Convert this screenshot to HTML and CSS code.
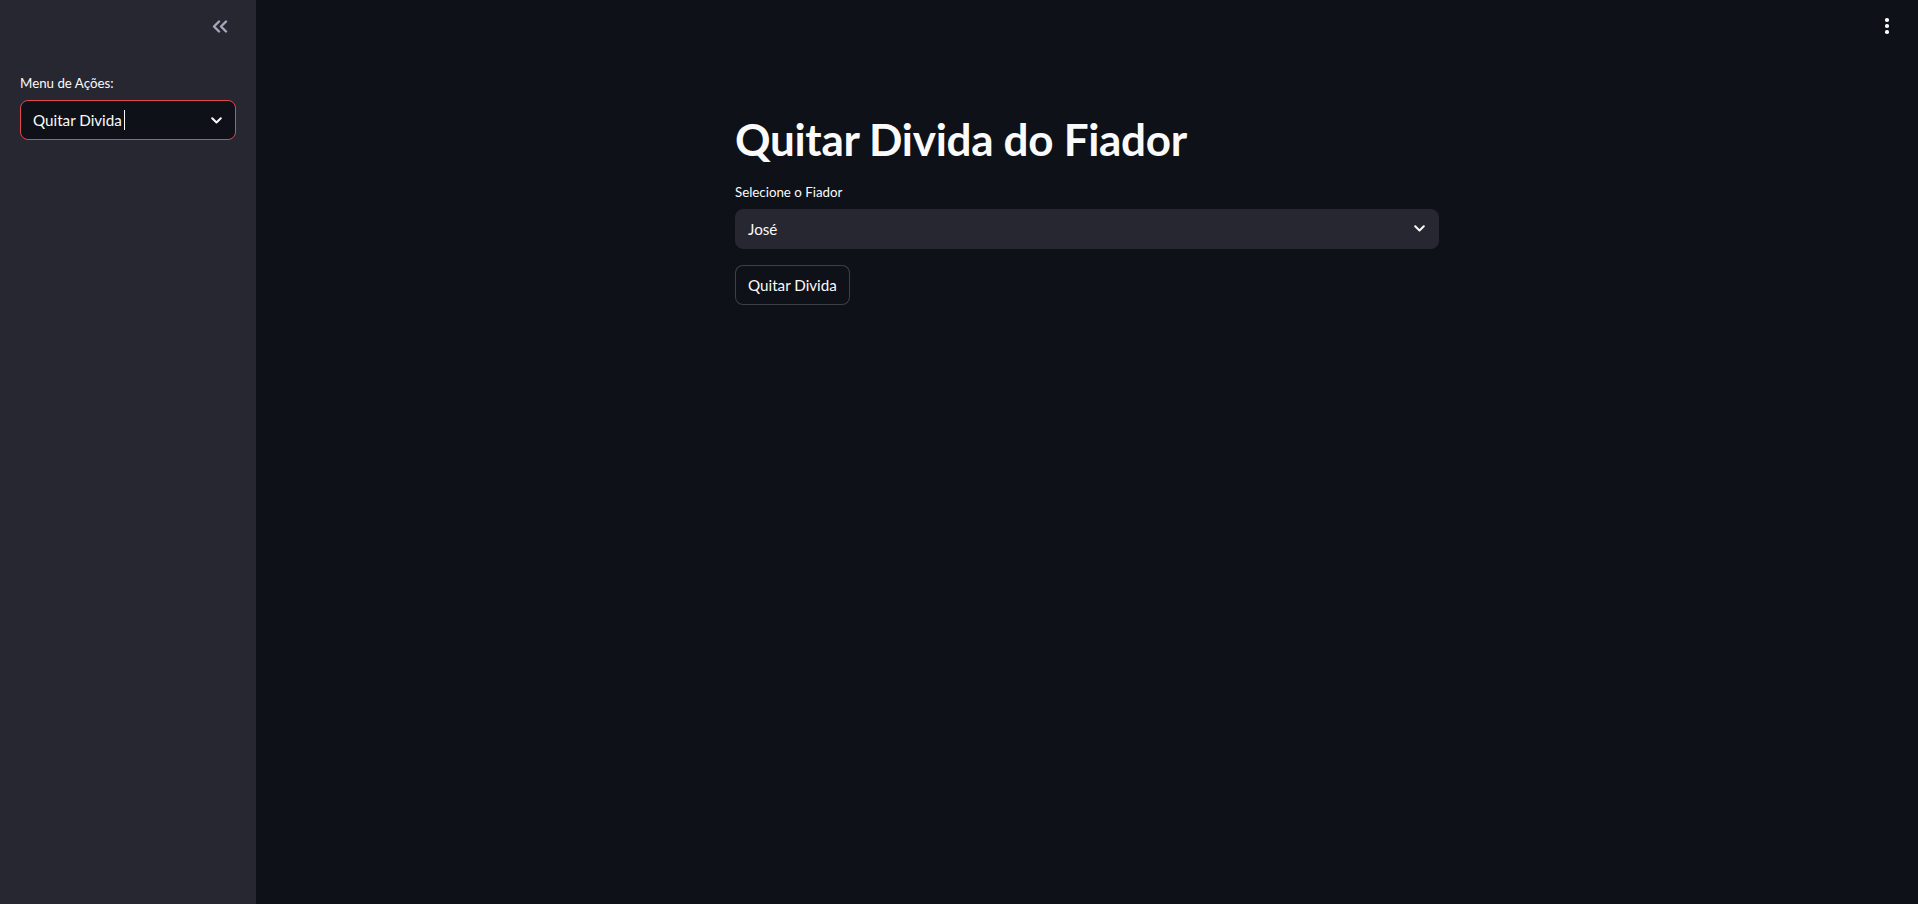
FILE: index.html
```html
<!DOCTYPE html>
<html lang="pt">
<head>
<meta charset="utf-8">
<title>Quitar Divida do Fiador</title>
<link rel="stylesheet" href="styles.css">
</head>
<body>
<aside class="sidebar">
  <div class="sidebar-header">
    <button class="collapse-btn" aria-label="Fechar barra lateral">
      <svg width="16" height="13" viewBox="0 0 16 13" fill="none" stroke="#a3a8b8" stroke-width="2.4" stroke-linecap="round" stroke-linejoin="round">
        <polyline points="7,1.5 2,6.5 7,11.5"/>
        <polyline points="14,1.5 9,6.5 14,11.5"/>
      </svg>
    </button>
  </div>
  <div class="sidebar-content">
    <label class="field-label">Menu de Ações:</label>
    <div class="select select-focused">
      <span class="select-value">Quitar Divida<span class="caret"></span></span>
      <svg class="chevron" width="11" height="7" viewBox="0 0 11 7" fill="none" stroke="#fafafa" stroke-width="2" stroke-linecap="round" stroke-linejoin="round">
        <polyline points="1.2,1.2 5.5,5.5 9.8,1.2"/>
      </svg>
    </div>
  </div>
</aside>
<main class="main">
  <header class="toolbar">
    <button class="menu-btn" aria-label="Menu">
      <span class="dot"></span><span class="dot"></span><span class="dot"></span>
    </button>
  </header>
  <section class="block">
    <h1 class="title">Quitar Divida do Fiador</h1>
    <label class="field-label">Selecione o Fiador</label>
    <div class="select select-filled">
      <span class="select-value">José</span>
      <svg class="chevron" width="11" height="7" viewBox="0 0 11 7" fill="none" stroke="#fafafa" stroke-width="2" stroke-linecap="round" stroke-linejoin="round">
        <polyline points="1.2,1.2 5.5,5.5 9.8,1.2"/>
      </svg>
    </div>
    <div class="actions">
      <button class="btn">Quitar Divida</button>
    </div>
  </section>
</main>
</body>
</html>
```
FILE: styles.css
```css
* { box-sizing: border-box; }

html, body {
  margin: 0;
  height: 100%;
}

body {
  display: flex;
  background: #0e1117;
  color: #fafafa;
  font-family: "Lato", "Liberation Sans", sans-serif;
  overflow: hidden;
}

.sidebar {
  width: 256px;
  flex: 0 0 256px;
  height: 100vh;
  background: #262730;
  display: flex;
  flex-direction: column;
}

.sidebar-header {
  display: flex;
  justify-content: flex-end;
  padding: 14px 24px 0 0;
  height: 40px;
}

.collapse-btn {
  background: none;
  border: none;
  padding: 0;
  width: 24px;
  height: 24px;
  display: flex;
  align-items: center;
  justify-content: center;
  cursor: pointer;
}

.sidebar-content {
  padding: 33px 20px 0 20px;
}

.field-label {
  display: block;
  font-size: 13.3px;
  line-height: 20px;
  color: #fafafa;
  margin-bottom: 7px;
}

.select {
  height: 40px;
  border-radius: 8px;
  display: flex;
  align-items: center;
  justify-content: space-between;
  padding: 0 13px 0 12px;
  font-size: 15.2px;
}

.select-focused {
  background: #0e1117;
  border: 1px solid #e0484b;
}

.select-filled {
  background: #262730;
  border: 1px solid #262730;
}

.select-value {
  display: flex;
  align-items: center;
}

.caret {
  display: inline-block;
  width: 1px;
  height: 20px;
  background: #fafafa;
  margin-left: 2px;
}

.chevron { flex: 0 0 auto; }

.main {
  flex: 1;
  height: 100vh;
  display: flex;
  flex-direction: column;
}

.toolbar {
  display: flex;
  justify-content: flex-end;
  padding: 14px 19px 0 0;
  height: 48px;
}

.menu-btn {
  background: none;
  border: none;
  padding: 0;
  width: 24px;
  height: 24px;
  display: flex;
  flex-direction: column;
  align-items: center;
  justify-content: center;
  gap: 2.5px;
  cursor: pointer;
}

.dot {
  width: 3.5px;
  height: 3.5px;
  border-radius: 50%;
  background: #fafafa;
}

.block {
  width: 736px;
  margin: 0 auto;
  padding: 0 16px;
}

.title {
  font-size: 44px;
  font-weight: 700;
  line-height: 1.2;
  margin: 0;
  padding: 65px 0 16px 0;
  letter-spacing: -0.3px;
}

.actions {
  padding-top: 16px;
}

.btn {
  background: #0e1117;
  color: #fafafa;
  border: 1px solid rgba(250, 250, 250, 0.2);
  border-radius: 8px;
  height: 40px;
  padding: 0 12px;
  font-family: inherit;
  font-size: 15.2px;
  cursor: pointer;
}
```
